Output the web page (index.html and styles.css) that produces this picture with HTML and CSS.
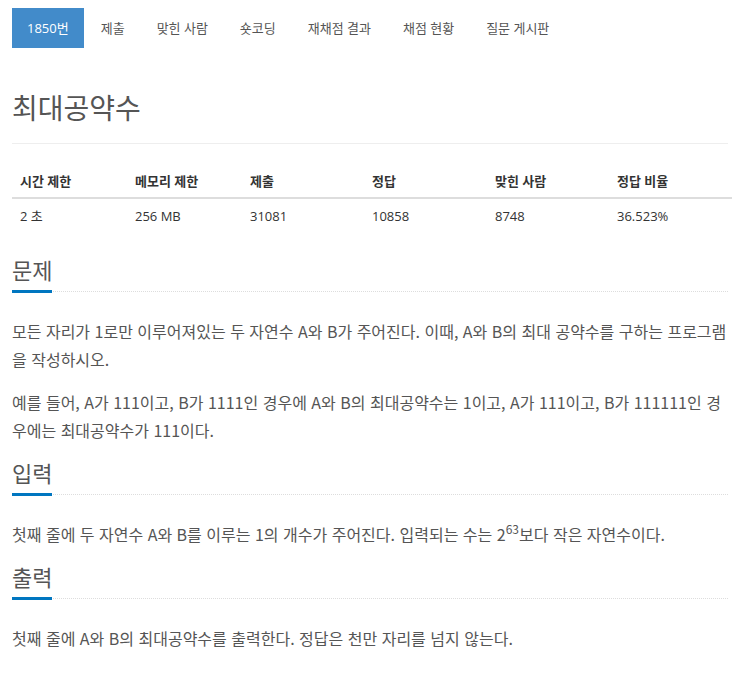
FILE: index.html
```html
<!DOCTYPE html>
<html lang="ko">
<head>
<meta charset="utf-8">
<title>최대공약수</title>
<link rel="stylesheet" href="styles.css">
</head>
<body>
<div class="container">
  <ul class="nav">
    <li class="active"><a href="#">1850번</a></li>
    <li><a href="#">제출</a></li>
    <li><a href="#">맞힌 사람</a></li>
    <li><a href="#">숏코딩</a></li>
    <li><a href="#">재채점 결과</a></li>
    <li><a href="#">채점 현황</a></li>
    <li><a href="#">질문 게시판</a></li>
  </ul>

  <div class="page-header">
    <h1 class="title">최대공약수</h1>
  </div>

  <table class="info">
    <thead>
      <tr>
        <th class="c1">시간 제한</th>
        <th class="c2">메모리 제한</th>
        <th class="c3">제출</th>
        <th class="c4">정답</th>
        <th class="c5">맞힌 사람</th>
        <th class="c6">정답 비율</th>
      </tr>
    </thead>
    <tbody>
      <tr>
        <td>2 초</td>
        <td>256 MB</td>
        <td>31081</td>
        <td>10858</td>
        <td>8748</td>
        <td>36.523%</td>
      </tr>
    </tbody>
  </table>

  <section class="problem-section">
    <div class="headline"><h2>문제</h2></div>
    <div class="text">
      <p>모든 자리가 1로만 이루어져있는 두 자연수 A와 B가 주어진다. 이때, A와 B의 최대 공약수를 구하는 프로그램을 작성하시오.</p>
      <p>예를 들어, A가 111이고, B가 1111인 경우에 A와 B의 최대공약수는 1이고, A가 111이고, B가 111111인 경우에는 최대공약수가 111이다.</p>
    </div>
  </section>

  <section class="problem-section">
    <div class="headline"><h2>입력</h2></div>
    <div class="text">
      <p>첫째 줄에 두 자연수 A와 B를 이루는 1의 개수가 주어진다. 입력되는 수는 2<sup>63</sup>보다 작은 자연수이다.</p>
    </div>
  </section>

  <section class="problem-section">
    <div class="headline"><h2>출력</h2></div>
    <div class="text">
      <p>첫째 줄에 A와 B의 최대공약수를 출력한다. 정답은 천만 자리를 넘지 않는다.</p>
    </div>
  </section>
</div>
</body>
</html>
```

FILE: styles.css
```css
* { box-sizing: border-box; }

html, body {
  margin: 0;
  padding: 0;
  background: #fff;
}

body {
  font-family: "Open Sans", "Noto Sans CJK KR", sans-serif;
  font-size: 13px;
  line-height: 20px;
  color: #555;
}

.container {
  padding: 8px 12px 0 12px;
}

.nav {
  list-style: none;
  margin: 0;
  padding: 0;
  display: flex;
}

.nav li + li { margin-left: 2px; }

.nav a {
  display: block;
  padding: 10px 15px;
  color: #555;
  text-decoration: none;
}

.nav li.active a {
  background: #428bca;
  color: #fff;
}

.page-header {
  margin-top: 40px;
  border-bottom: 1px solid #eee;
  padding-bottom: 15px;
}

.title {
  margin: 0;
  font-weight: 400;
  font-size: 28px;
  line-height: 40px;
  color: #555;
}

.info {
  width: 100%;
  margin-top: 19px;
  margin-bottom: 20px;
  border-collapse: collapse;
  table-layout: fixed;
}

.info th, .info td {
  text-align: left;
  line-height: 20px;
}

.info th {
  padding: 8px 8px 6px 8px;
  font-weight: 700;
  color: #333;
  border-bottom: 2px solid #ddd;
}

.info td {
  padding: 7px 8px 8px 8px;
  color: #333;
}

.c1 { width: 115px; }
.c2 { width: 115px; }
.c3 { width: 122px; }
.c4 { width: 123px; }
.c5 { width: 122px; }
.c6 { width: 123px; }

.problem-section {
  font-family: "Noto Sans CJK KR", "Roboto", sans-serif;
}

.headline {
  border-bottom: 1px dotted #ddd;
}

.headline h2 {
  display: inline-block;
  margin: 0 0 -2px 0;
  font-size: 22px;
  line-height: 30px;
  font-weight: 400;
  color: #555;
  border-bottom: 3px solid #0076c0;
  padding-bottom: 6px;
}

.text {
  padding-top: 25px;
}

.text p {
  margin: 0 0 15px 0;
  font-size: 16px;
  line-height: 28px;
  color: #555;
}

.text p:last-child {
  margin-bottom: 13px;
}

.text sup {
  font-size: 12px;
  line-height: 0;
  vertical-align: 7px;
}
```
